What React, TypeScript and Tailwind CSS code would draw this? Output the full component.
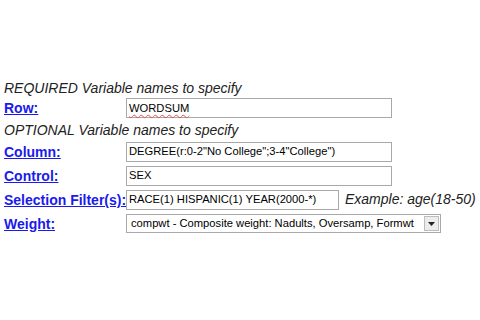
const font = { fontFamily: '"Liberation Sans", Arial, sans-serif' };

function Label({ children }: { children: React.ReactNode }) {
  return (
    <div className="w-[122px] shrink-0 whitespace-nowrap">
      <a href="#" className="text-[14px] font-bold text-[#1a1aee] underline leading-[18px]">
        {children}
      </a>
    </div>
  );
}

function Field({ value, width, spell }: { value: string; width: string; spell?: boolean }) {
  return (
    <div className={`${width} h-[20px] border border-[#a9a9a9] bg-white flex items-center px-[2px] text-[11.2px] text-black whitespace-nowrap`}>
      <span className={spell ? 'underline decoration-wavy decoration-[#e05050] decoration-1 underline-offset-2' : ''}>{value}</span>
    </div>
  );
}

export default function App() {
  return (
    <div className="w-[480px] h-[320px] bg-white pt-[80px] pl-[4px]" style={font}>
      <div className="italic text-[14px] leading-[17px] text-[#222]">REQUIRED Variable names to specify</div>
      <div className="flex items-center h-[22px]">
        <Label>Row:</Label>
        <Field value="WORDSUM" width="w-[266px]" spell />
      </div>
      <div className="italic text-[14px] leading-[22px] text-[#222]">OPTIONAL Variable names to specify</div>
      <div className="flex flex-col gap-[3px]">
        <div className="flex items-center h-[21px]">
          <Label>Column:</Label>
          <Field value={'DEGREE(r:0-2"No College";3-4"College")'} width="w-[266px]" />
        </div>
        <div className="flex items-center h-[21px]">
          <Label>Control:</Label>
          <Field value="SEX" width="w-[266px]" />
        </div>
        <div className="flex items-center h-[21px]">
          <Label>Selection Filter(s):</Label>
          <Field value={'RACE(1) HISPANIC(1) YEAR(2000-*)'} width="w-[213px]" />
          <span className="ml-[6px] italic text-[14px] text-[#222] whitespace-nowrap">Example: age(18-50)</span>
        </div>
        <div className="flex items-center h-[21px]">
          <Label>Weight:</Label>
          <div className="w-[315px] h-[19px] border border-[#a9a9a9] bg-white flex items-center text-[11.2px] text-black">
            <span className="flex-1 pl-[4px] whitespace-nowrap overflow-hidden">compwt - Composite weight: Nadults, Oversamp, Formwt</span>
            <div className="w-[15px] h-[15px] mr-[1px] border border-[#bdbdbd] bg-[#ececec] flex items-center justify-center">
              <svg width="7" height="4" viewBox="0 0 7 4"><path d="M0 0h7L3.5 4z" fill="#222" /></svg>
            </div>
          </div>
        </div>
      </div>
    </div>
  );
}
